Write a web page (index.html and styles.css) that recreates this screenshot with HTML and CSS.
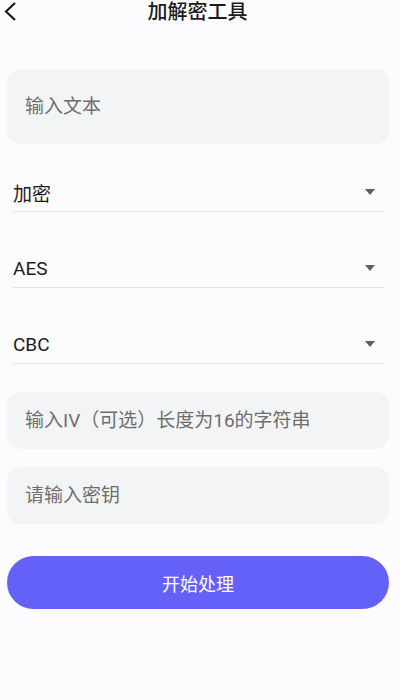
FILE: index.html
```html
<!DOCTYPE html>
<html lang="zh-CN">

<head>
    <meta charset="UTF-8">
    <meta name="viewport" content="width=device-width, initial-scale=1.0">
    <title>加解密工具</title>

    <link rel="stylesheet" href="styles.css">
</head>

<body>
    <div class="header">
        <div class="back">
            <svg width="20" height="24" viewBox="0 0 20 24">
                <path d="M15 3 L6 11.5 L15 20" fill="none" stroke="#1c1b1f" stroke-width="2.2" />
            </svg>
        </div>
        <h1>加解密工具</h1>
        <div></div>
    </div>

    <div class="form">
        <input class="field text_field" type="text" placeholder="输入文本">

        <div class="dropdown first"><span>加密</span><i class="arrow"></i></div>
        <div class="dropdown"><span>AES</span><i class="arrow"></i></div>
        <div class="dropdown"><span>CBC</span><i class="arrow"></i></div>

        <input class="field iv_field" type="text" placeholder="输入IV（可选）长度为16的字符串">
        <input class="field key_field" type="text" placeholder="请输入密钥">

        <button class="submit">开始处理</button>
    </div>
</body>

</html>
```

FILE: styles.css
```css
body {
    margin: 0;
    background-color: #fcfbfd;
    font-family: Roboto, "Noto Sans CJK SC", sans-serif;
    color: #1d1b20;
}

.header {
    display: grid;
    grid-template-columns: 1fr auto 1fr;
    align-items: center;
    height: 24px;
    padding-right: 5px;
}

.back svg {
    display: block;
}

h1 {
    margin: 0;
    font-size: 20px;
    font-weight: 500;
    line-height: 24px;
    color: #1c1b1f;
}

.form {
    display: flex;
    flex-direction: column;
    padding: 0 11px 0 7px;
    margin-top: 45px;
}

.field {
    box-sizing: border-box;
    border: none;
    outline: none;
    background-color: #f3f4f5;
    border-radius: 14px;
    padding: 0 18px;
    font-family: inherit;
    font-size: 19px;
    color: #1d1b20;
}

.field::placeholder {
    color: #6e6e70;
}

.text_field {
    height: 75px;
}

.iv_field {
    height: 57px;
    margin-top: 28px;
}

.key_field {
    height: 57px;
    margin-top: 18px;
}

.dropdown {
    box-sizing: border-box;
    display: flex;
    align-items: center;
    justify-content: space-between;
    height: 39px;
    margin: 37px 5px 0 6px;
    padding-right: 9px;
    border-bottom: 1px solid #e3e2e6;
    font-size: 19px;
}

.dropdown.first {
    margin-top: 29px;
}

.arrow {
    width: 0;
    height: 0;
    border-left: 5.5px solid transparent;
    border-right: 5.5px solid transparent;
    border-top: 6px solid #5f5f62;
}

.submit {
    height: 53px;
    margin-top: 32px;
    border: none;
    border-radius: 27px;
    background-color: #6461f9;
    color: #ffffff;
    font-family: inherit;
    font-size: 18px;
}
```
